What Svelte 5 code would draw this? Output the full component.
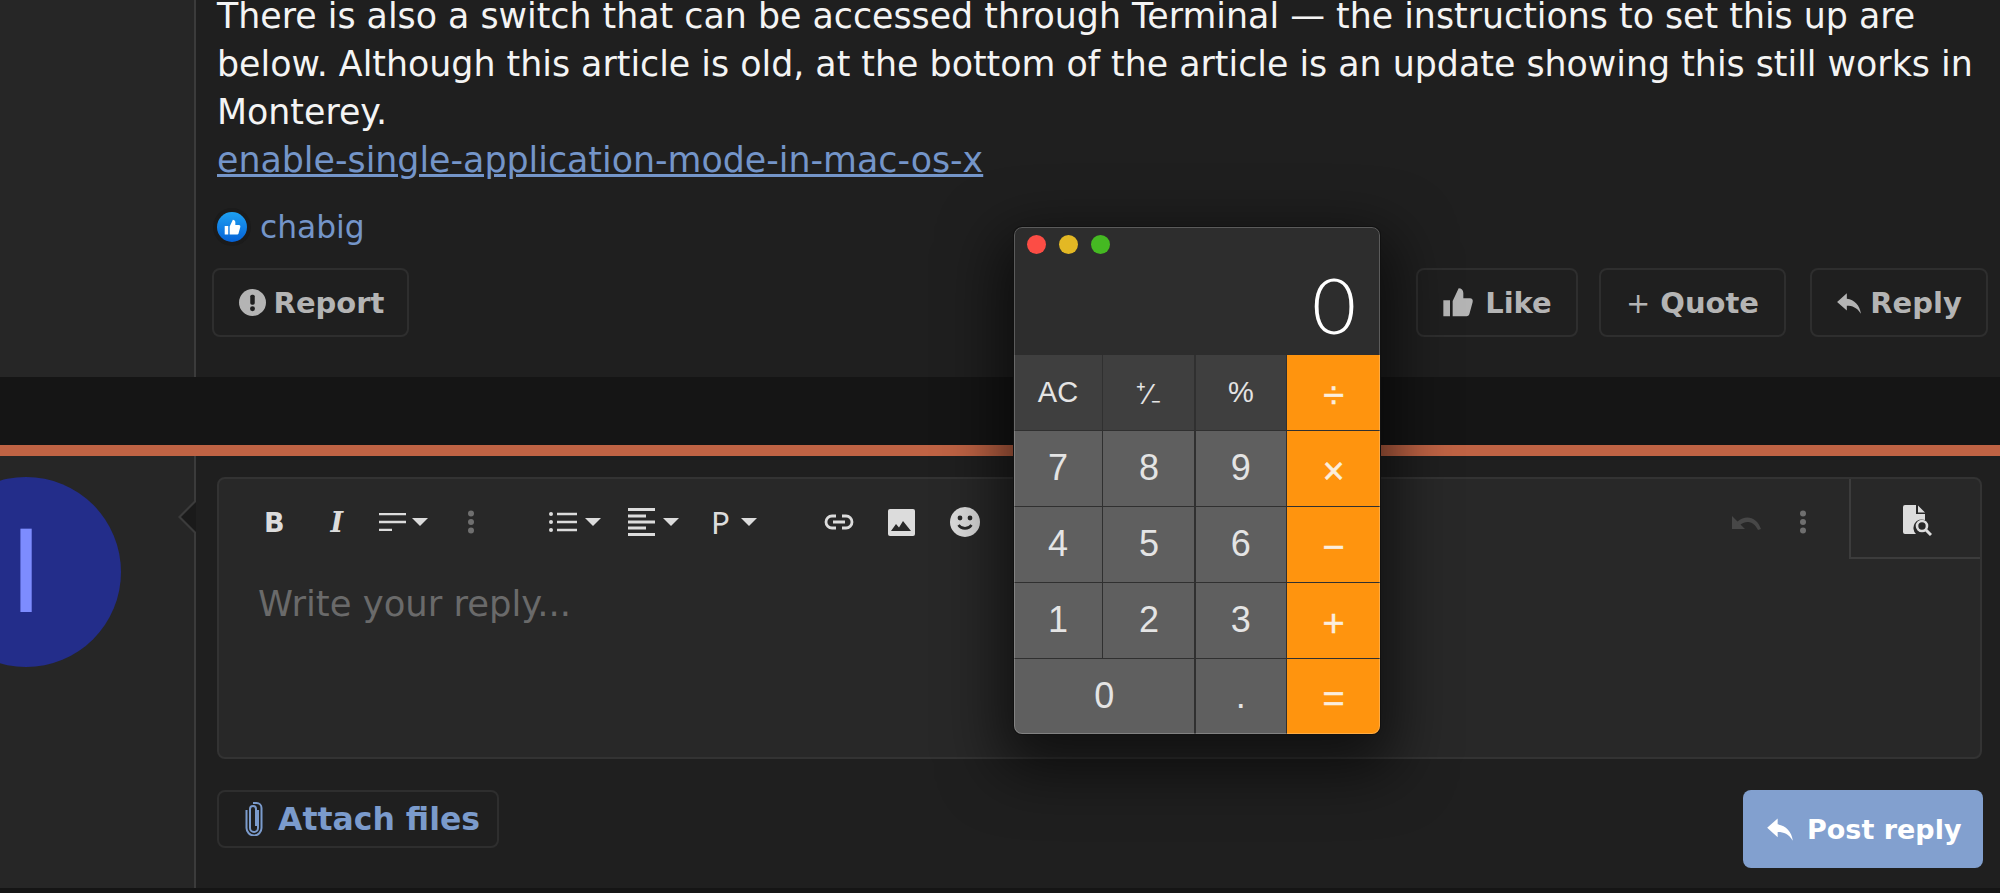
<script lang="ts">
  const keys = [
    { label: "AC", kind: "fn" },
    { label: "⁺∕₋", kind: "fn" },
    { label: "%", kind: "fn" },
    { label: "÷", kind: "op" },
    { label: "7", kind: "num" },
    { label: "8", kind: "num" },
    { label: "9", kind: "num" },
    { label: "×", kind: "op" },
    { label: "4", kind: "num" },
    { label: "5", kind: "num" },
    { label: "6", kind: "num" },
    { label: "−", kind: "op" },
    { label: "1", kind: "num" },
    { label: "2", kind: "num" },
    { label: "3", kind: "num" },
    { label: "+", kind: "op" },
    { label: "0", kind: "num wide" },
    { label: ".", kind: "num" },
    { label: "=", kind: "op" },
  ];
  const replyPath = "M10 3 L1 11 L10 19 V14.5 C15 14.5 19.5 16 23 22 C22 14 17 9 10 8z";
  const thumbPath = "M1 10h5v12H1z M8 10.5 L12.5 1 C14.5 1 16 2.5 16 4.5 V8.5 H21 C22.5 8.5 23.4 9.8 23 11.2 L20.5 20.5 C20.2 21.5 19.3 22 18.4 22 H8z";
</script>

<div class="page">
  <section class="post">
    <aside class="side"></aside>
    <div class="body">
      <div class="text">
        <p>There is also a switch that can be accessed through Terminal — the instructions to set this up are below. Although this article is old, at the bottom of the article is an update showing this still works in Monterey.</p>
        <a href="#top">enable-single-application-mode-in-mac-os-x</a>
      </div>
      <div class="likes">
        <span class="like-badge">
          <svg viewBox="0 0 24 24" width="17" height="17"><path d={thumbPath} fill="#fff" /></svg>
        </span>
        <span class="liker">chabig</span>
      </div>
      <div class="actions">
        <button class="act report">
          <svg viewBox="0 0 24 24" width="27" height="27">
            <circle cx="12" cy="12" r="12" fill="#b4b4b4" />
            <rect x="10" y="5" width="4" height="9" rx="1.5" fill="#1f1f1f" />
            <circle cx="12" cy="17.5" r="2.2" fill="#1f1f1f" />
          </svg>
          Report
        </button>
        <div class="act-right">
          <button class="act like">
            <svg viewBox="0 0 24 24" width="32" height="32"><path d={thumbPath} fill="#b4b4b4" /></svg>
            Like
          </button>
          <button class="act quote"><span class="plus">+</span> Quote</button>
          <button class="act reply">
            <svg viewBox="0 0 24 24" width="26" height="26"><path d={replyPath} fill="#b4b4b4" /></svg>
            Reply
          </button>
        </div>
      </div>
    </div>
  </section>

  <div class="divider"></div>
  <div class="bar"></div>

  <section class="compose">
    <aside class="side side-reply">
      <div class="avatar"><span>I</span></div>
      <span class="arrow"></span>
    </aside>
    <div class="body body-reply">
      <div class="editor">
        <div class="toolbar">
          <span class="t-b">B</span>
          <span class="t-i">I</span>
          <span class="t-align">
            <svg viewBox="0 0 27 18" width="27" height="18"><path d="M0 1h27M0 9h27M0 17h13" stroke="#dcdcdc" stroke-width="2.6" /></svg>
            <i class="caret"></i>
          </span>
          <svg class="t-dots" viewBox="0 0 8 24" width="8" height="24"><circle cx="4" cy="3.5" r="3" /><circle cx="4" cy="12" r="3" /><circle cx="4" cy="20.5" r="3" /></svg>
          <span class="t-list">
            <svg viewBox="0 0 28 20" width="28" height="20">
              <path d="M8 2h20M8 10h20M8 18h20" stroke="#dcdcdc" stroke-width="2.6" />
              <circle cx="2" cy="2" r="2" fill="#dcdcdc" /><circle cx="2" cy="10" r="2" fill="#dcdcdc" /><circle cx="2" cy="18" r="2" fill="#dcdcdc" />
            </svg>
            <i class="caret"></i>
          </span>
          <span class="t-para">
            <svg viewBox="0 0 27 28" width="27" height="28"><path d="M0 1.5h27M0 8h18M0 14h27M0 20h18M0 26.5h27" stroke="#dcdcdc" stroke-width="2.8" /></svg>
            <i class="caret"></i>
          </span>
          <span class="t-p">P<i class="caret"></i></span>
          <svg class="t-link" viewBox="0 0 30 16" width="30" height="16" fill="none" stroke="#dcdcdc" stroke-width="2.8">
            <path d="M12 2H8a6 6 0 0 0 0 12h4M18 2h4a6 6 0 0 1 0 12h-4M9 8h12" />
          </svg>
          <svg class="t-image" viewBox="0 0 27 27" width="27" height="27">
            <rect width="27" height="27" rx="2" fill="#dcdcdc" />
            <path d="M3 22l5-7 3 3.5 4-6.5 8 10z" fill="#282828" />
          </svg>
          <svg class="t-smile" viewBox="0 0 30 30" width="30" height="30">
            <circle cx="15" cy="15" r="15" fill="#dcdcdc" />
            <circle cx="10" cy="11" r="2.4" fill="#282828" /><circle cx="20" cy="11" r="2.4" fill="#282828" />
            <path d="M8.5 18c3 4.5 10 4.5 13 0" fill="none" stroke="#282828" stroke-width="2.6" />
          </svg>
          <svg class="t-undo" viewBox="0 0 29 16" width="29" height="16">
            <path d="M0 1v13h13l-4.5-4.500C14 5 22 6 26 15l3-1C25 2 14-1 5.500 6.500z" fill="#474747" />
          </svg>
          <svg class="t-dots t-dots2" viewBox="0 0 8 24" width="8" height="24"><circle cx="4" cy="3.5" r="3" /><circle cx="4" cy="12" r="3" /><circle cx="4" cy="20.5" r="3" /></svg>
          <span class="preview">
            <svg viewBox="0 0 29 32" width="29" height="32">
              <path d="M2 0h11v9h9v6a8.5 8.5 0 0 0-9 14H2a2 2 0 0 1-2-2V2a2 2 0 0 1 2-2z M15 0.5l7 7h-7z" fill="#dcdcdc" />
              <circle cx="19" cy="21" r="5" fill="none" stroke="#dcdcdc" stroke-width="2.6" />
              <path d="M23 25l5 5" stroke="#dcdcdc" stroke-width="3" />
            </svg>
          </span>
        </div>
        <div class="placeholder">Write your reply...</div>
      </div>
      <div class="form-foot">
        <button class="attach">
          <svg viewBox="0 0 18 34" width="18" height="34" fill="none" stroke="#7b9bcc" stroke-width="2">
            <path d="M13 8v18a4 4 0 0 1-8 0V7a3 3 0 0 1 6 0v17M1.5 8v18a7.5 7.5 0 0 0 15 0V6a5 5 0 0 0-5-5H8" />
          </svg>
          Attach files
        </button>
        <button class="post-btn">
          <svg viewBox="0 0 24 24" width="28" height="28"><path d={replyPath} fill="#fff" /></svg>
          Post reply
        </button>
      </div>
    </div>
  </section>

  <div class="calc">
    <div class="titlebar">
      <i class="light red"></i><i class="light yellow"></i><i class="light green"></i>
    </div>
    <div class="display">0</div>
    <div class="keys">
      {#each keys as key}
        <div class="key {key.kind}">{key.label}</div>
      {/each}
    </div>
  </div>
</div>

<style>
  :global(body) {
    margin: 0;
    background: #151515;
  }

  .page {
    position: relative;
    width: 2000px;
    height: 893px;
    overflow: hidden;
    background: #151515;
    font-family: "DejaVu Sans", sans-serif;
    color: #fff;
  }

  .post {
    display: flex;
    height: 377px;
    overflow: hidden;
  }

  .side {
    position: relative;
    flex: 0 0 194px;
    background: #262626;
    border-right: 2px solid #3b3b3b;
  }

  .body {
    flex: 1;
    background: #1f1f1f;
    padding-left: 20px;
    padding-right: 12px;
    min-width: 0;
  }

  .text {
    margin-top: -8px;
    padding-left: 1px;
    font-size: 34.8px;
    line-height: 48px;
    color: #f4f4f4;
  }

  .text p {
    margin: 0;
  }

  .text a {
    color: #7495c9;
  }

  .likes {
    display: flex;
    align-items: center;
    gap: 13px;
    margin-top: 23px;
    margin-left: 1px;
    height: 40px;
  }

  .like-badge {
    display: flex;
    align-items: center;
    justify-content: center;
    width: 30px;
    height: 30px;
    border-radius: 50%;
    background: linear-gradient(#1ea1f2, #0561d6);
    box-shadow: 0 0 0 4px #1b1b1b;
  }

  .liker {
    font-size: 31.3px;
    color: #7495c9;
  }

  .actions {
    display: flex;
    justify-content: space-between;
    margin-top: 21px;
    margin-left: -4px;
  }

  .act-right {
    display: flex;
    gap: 22px;
  }

  button {
    font-family: inherit;
    font-weight: 700;
    cursor: pointer;
  }

  .act {
    display: flex;
    align-items: center;
    justify-content: center;
    gap: 8px;
    height: 69px;
    padding: 0;
    background: #1f1f1f;
    border: 2px solid #2e2e2e;
    border-radius: 8px;
    font-size: 29px;
    color: #b4b4b4;
  }

  .report { width: 197px; padding-left: 2px; }
  .like { width: 162px; gap: 11px; margin-right: -1px; }
  .quote { width: 187px; gap: 10px; }
  .reply { width: 178px; margin-left: 2px; }

  .plus {
    font-weight: 400;
  }

  .divider {
    height: 68px;
  }

  .bar {
    height: 11px;
    background: #bf6344;
  }

  .compose {
    display: flex;
    height: 432px;
  }

  .avatar {
    position: absolute;
    top: 21px;
    left: -69px;
    width: 190px;
    height: 190px;
    border-radius: 50%;
    background: #232d8a;
    color: #7d8cff;
    display: flex;
    align-items: center;
    justify-content: center;
    font-size: 114px;
  }

  .arrow {
    position: absolute;
    top: 43px;
    right: -2px;
    width: 18px;
    height: 36px;
    background: #3b3b3b;
    clip-path: polygon(100% 0, 0 50%, 100% 100%);
  }

  .arrow::after {
    content: "";
    position: absolute;
    inset: 3px 0 3px 3px;
    background: #1a1a1a;
    clip-path: polygon(100% 0, 0 50%, 100% 100%);
  }

  .editor {
    margin-top: 21px;
    margin-left: 1px;
    margin-right: 6px;
    height: 282px;
    box-sizing: border-box;
    background: #282828;
    border: 2px solid #333;
    border-radius: 8px;
  }

  .toolbar {
    display: flex;
    align-items: center;
    height: 86px;
    color: #dcdcdc;
  }

  .t-b {
    margin-left: 45px;
    font-weight: 700;
    font-size: 27px;
  }

  .t-i {
    margin-left: 46px;
    font-family: "DejaVu Serif", serif;
    font-style: italic;
    font-weight: 700;
    font-size: 27px;
  }

  .t-align,
  .t-list,
  .t-para,
  .t-p {
    display: flex;
    align-items: center;
    gap: 8px;
  }

  .t-align { margin-left: 36px; gap: 6px; }
  .t-list { margin-left: 74px; }
  .t-para { margin-left: 27px; }

  .t-p {
    margin-left: 32px;
    gap: 12px;
    font-family: "Lato", sans-serif;
    font-weight: 400;
    font-size: 30px;
  }

  .caret {
    display: block;
    width: 0;
    height: 0;
    border-left: 8px solid transparent;
    border-right: 8px solid transparent;
    border-top: 8px solid #dcdcdc;
  }

  .t-dots {
    margin-left: 39px;
    fill: #6f6f6f;
  }

  .t-link { margin-left: 67px; }
  .t-image { margin-left: 34px; }
  .t-smile { margin-left: 35px; }
  .t-undo { margin-left: auto; margin-top: 2px; }

  .t-dots2 {
    margin-left: 38px;
  }

  .preview {
    display: flex;
    align-items: center;
    justify-content: center;
    align-self: flex-start;
    box-sizing: border-box;
    height: 80px;
    padding-top: 6px;
    padding-left: 3px;
    margin-left: 42px;
    width: 131px;
    border-left: 2px solid #3c3c3c;
    border-bottom: 2px solid #3c3c3c;
  }

  .placeholder {
    margin-top: 15px;
    padding-left: 39px;
    font-size: 35.4px;
    line-height: 48px;
    color: #6a6a6a;
  }

  .form-foot {
    display: flex;
    justify-content: space-between;
    align-items: flex-start;
    margin-top: 31px;
    margin-left: 1px;
    margin-right: 5px;
  }

  .attach {
    display: flex;
    align-items: center;
    gap: 15px;
    height: 58px;
    width: 282px;
    padding: 0 0 0 26px;
    background: #1f1f1f;
    border: 2px solid #2e2e2e;
    border-radius: 8px;
    font-size: 31.5px;
    color: #7b9bcc;
  }

  .post-btn {
    display: flex;
    align-items: center;
    gap: 13px;
    width: 240px;
    height: 78px;
    padding: 0 0 0 23px;
    background: #82a0cf;
    border: 0;
    border-radius: 8px;
    font-size: 27px;
    color: #fff;
  }

  .calc {
    position: absolute;
    top: 227px;
    left: 1014px;
    width: 366px;
    height: 507px;
    border-radius: 8px;
    overflow: hidden;
    background: #2d2d2d;
    box-shadow: 0 0 0 1px #111, 0 22px 60px 14px rgba(0, 0, 0, 0.6);
    font-family: "Liberation Sans", sans-serif;
  }

  .calc::after {
    content: "";
    position: absolute;
    inset: 0;
    border: 1px solid rgba(255, 255, 255, 0.22);
    border-radius: 8px;
    pointer-events: none;
  }

  .titlebar {
    display: flex;
    gap: 13px;
    padding: 8px 13px 0;
    height: 20px;
  }

  .light {
    display: block;
    width: 19px;
    height: 19px;
    border-radius: 50%;
  }

  .red { background: #fc4d45; }
  .yellow { background: #e3b824; }
  .green { background: #45b922; }

  .display {
    height: 100px;
    box-sizing: border-box;
    padding-right: 24px;
    text-align: right;
    font-family: "Lato", sans-serif;
    font-weight: 300;
    font-size: 76px;
    line-height: 100px;
    color: #fff;
  }

  .keys {
    display: grid;
    grid-template-columns: 88px 91px 90px 93px;
    grid-template-rows: repeat(5, 74.6px);
    gap: 1.4px;
    background: #303030;
    height: 379px;
  }

  .key {
    display: flex;
    align-items: center;
    justify-content: center;
    background: #5f5f5f;
    font-size: 36px;
    color: #e4e4e4;
  }

  .fn {
    background: #3f3f3f;
    font-size: 29px;
  }

  .op {
    box-sizing: border-box;
    padding-top: 6px;
    background: #ff940e;
    font-size: 38px;
    -webkit-text-stroke: 0.5px #fbeedd;
    color: #fbeedd;
  }

  .wide {
    grid-column: span 2;
  }
</style>
